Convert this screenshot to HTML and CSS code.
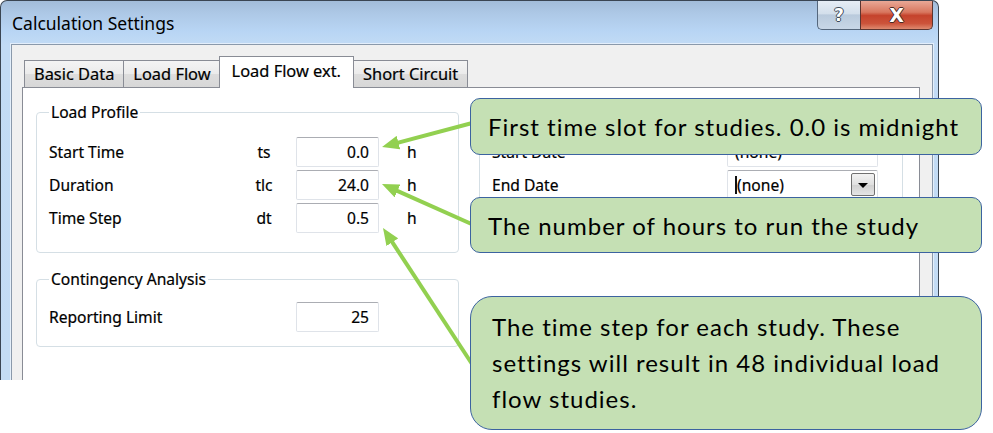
FILE: index.html
```html
<!DOCTYPE html>
<html>
<head>
<meta charset="utf-8">
<title>Calculation Settings</title>
<link rel="stylesheet" href="styles.css">
</head>
<body>
<div class="stage">
  <div class="window">
    <div class="titlebar">
      <span class="title">Calculation Settings</span>
      <div class="caption-buttons">
        <span class="cap-btn help">?</span>
        <span class="cap-btn close">X</span>
      </div>
    </div>
    <div class="client">
      <div class="tabs">
        <div class="tab">Basic Data</div>
        <div class="tab">Load Flow</div>
        <div class="tab active">Load Flow ext.</div>
        <div class="tab">Short Circuit</div>
      </div>
      <div class="panel">
        <div class="col-left">
          <fieldset class="group profile">
            <legend>Load Profile</legend>
            <div class="param-grid">
              <span class="lbl">Start Time</span><span class="sym">ts</span><span class="field num">0.0</span><span class="unit">h</span>
              <span class="lbl">Duration</span><span class="sym">tlc</span><span class="field num">24.0</span><span class="unit">h</span>
              <span class="lbl">Time Step</span><span class="sym">dt</span><span class="field num">0.5</span><span class="unit">h</span>
            </div>
          </fieldset>
          <fieldset class="group contingency">
            <legend>Contingency Analysis</legend>
            <div class="param-grid">
              <span class="lbl">Reporting Limit</span><span class="sym"></span><span class="field num">25</span><span class="unit"></span>
            </div>
          </fieldset>
        </div>
        <fieldset class="group dates">
          <div class="date-grid">
            <span class="lbl">Start Date</span><span class="field txt">(none)</span>
            <span class="lbl">End Date</span><span class="field txt combo"><span class="caret"></span>(none)<span class="drop"><span class="tri"></span></span></span>
          </div>
        </fieldset>
      </div>
    </div>
  </div>

  <svg class="arrows" width="993" height="433" viewBox="0 0 993 433">
    <defs>
      <marker id="head" markerUnits="userSpaceOnUse" markerWidth="17" markerHeight="14" refX="7" refY="7" orient="auto">
        <path d="M0,0 L17,7 L0,14 z" fill="#92d050"/>
      </marker>
    </defs>
    <line x1="476" y1="122" x2="391.7" y2="144.4" stroke="#92d050" stroke-width="4" marker-end="url(#head)"/>
    <line x1="476" y1="226" x2="391.1" y2="188.1" stroke="#92d050" stroke-width="4" marker-end="url(#head)"/>
    <line x1="474" y1="367" x2="388.5" y2="236.4" stroke="#92d050" stroke-width="4" marker-end="url(#head)"/>
  </svg>

  <div class="callout c1">First time slot for studies. 0.0 is midnight</div>
  <div class="callout c2">The number of hours to run the study</div>
  <div class="callout c3">The time step for each study. These settings will result in 48 individual load flow studies.</div>
</div>
</body>
</html>
```

FILE: styles.css
```css
html, body {
  margin: 0;
  padding: 0;
  background: #ffffff;
}

.stage {
  position: relative;
  width: 993px;
  height: 433px;
  overflow: hidden;
  background: #ffffff;
}

/* ---------- window frame ---------- */
.window {
  width: 939px;
  height: 380px;
  box-sizing: border-box;
  border: 1px solid #3a4552;
  border-bottom: none;
  border-radius: 7px 7px 0 0;
  overflow: hidden;
  display: flex;
  flex-direction: column;
  background: linear-gradient(180deg, #a2bcd9 0px, #adc8e6 12px, #b8d5f4 30px, #c2dbf5 44px, #c4dcf4 100%);
  font-family: "Noto Sans", "Open Sans", sans-serif;
  color: #111;
}

.titlebar {
  height: 43px;
  flex: none;
  display: flex;
  justify-content: space-between;
  align-items: flex-start;
  padding-left: 11px;
}

.title {
  font-size: 17.5px;
  line-height: 20px;
  margin-top: 12px;
  color: #000;
}

.caption-buttons {
  display: flex;
  margin-right: 5px;
}

.cap-btn {
  height: 29px;
  box-sizing: border-box;
  display: flex;
  align-items: center;
  justify-content: center;
  color: #fff;
  font-family: "DejaVu Sans", sans-serif;
  font-weight: bold;
  font-size: 17px;
}

.cap-btn.help {
  width: 43px;
  border: 1px solid #55677c;
  border-top: none;
  border-right: none;
  border-radius: 0 0 0 5px;
  background: linear-gradient(180deg, #e6edf5 0%, #d3dfeb 45%, #b9cadc 50%, #c8d7e7 100%);
  text-shadow: 1px 0 #3d4a58, -1px 0 #3d4a58, 0 1px #3d4a58, 0 -1px #3d4a58;
}

.cap-btn.close {
  width: 73px;
  border: 1px solid #5b3530;
  border-top: none;
  border-radius: 0 0 5px 0;
  background: linear-gradient(180deg, #e9a896 0%, #d8775f 40%, #c5432c 52%, #cc533a 80%, #de8a6f 100%);
  font-size: 19px;
  text-shadow: 1px 0 #4a2a25, -1px 0 #4a2a25, 0 1px #4a2a25, 0 -1px #4a2a25;
}

/* ---------- client ---------- */
.client {
  flex: 1;
  margin: 0 5px 0 10px;
  border: 1px solid #8a99ab;
  border-bottom: none;
  background: #f0f0f0;
  padding: 12px 12px 0 10px;
  display: flex;
  flex-direction: column;
  box-shadow: 0 0 0 1px rgba(255, 255, 255, 0.55);
}

.tabs {
  display: flex;
  align-items: flex-end;
  padding-left: 2px;
  height: 31px;
  position: relative;
  z-index: 2;
  margin-bottom: -1px;
}

.tab {
  height: 27px;
  box-sizing: border-box;
  padding: 0 9px;
  border: 1px solid #898c95;
  border-bottom: none;
  background: linear-gradient(180deg, #f4f4f4 0%, #ebebeb 50%, #dddddd 51%, #d7d7d7 100%);
  font-size: 16.4px;
  line-height: 26px;
  margin-right: -1px;
  margin-bottom: 1px;
  color: #000;
  -webkit-text-stroke: 0.2px #000;
}

.tab.active {
  height: 32px;
  margin-bottom: 0;
  padding: 0 12px;
  background: #ffffff;
  line-height: 28px;
  position: relative;
  z-index: 3;
  margin-left: -1px;
}

.panel {
  flex: 1;
  border: 1px solid #898c95;
  border-bottom: none;
  background: #ffffff;
  padding: 14px 15px 0 13px;
  display: flex;
  gap: 20px;
  align-items: flex-start;
}

.col-left {
  width: 423px;
  flex: none;
  display: flex;
  flex-direction: column;
  gap: 16px;
}

.group {
  margin: 0;
  box-sizing: border-box;
  border: 1px solid #d5dfe5;
  border-radius: 4px;
  padding: 14px 12px 19px 12px;
  font-size: 15.6px;
  min-width: 0;
}

.group legend {
  padding: 0 2px;
  line-height: 21px;
  color: #000;
  -webkit-text-stroke: 0.2px #000;
}

.group.contingency {
  padding-top: 12px;
  padding-bottom: 14px;
}

.group.dates {
  width: 424px;
  flex: none;
  margin-top: 10px;
  padding-top: 24px;
}

.param-grid {
  display: grid;
  grid-template-columns: 195px 52px 83px auto;
  row-gap: 3px;
  align-items: center;
}

.param-grid .sym {
  padding-right: 12px;
}

.param-grid .unit {
  padding-left: 28px;
}

.date-grid {
  display: grid;
  grid-template-columns: 235px 151px;
  row-gap: 3px;
  align-items: center;
}

.lbl, .sym, .unit {
  color: #000;
  line-height: 20px;
  -webkit-text-stroke: 0.2px #000;
}

.sym {
  text-align: center;
}

.field {
  height: 30px;
  box-sizing: border-box;
  border: 1px solid #dfe3e9;
  border-top-color: #abadb3;
  border-radius: 2px;
  background: #fff;
  display: flex;
  align-items: center;
  color: #000;
  -webkit-text-stroke: 0.2px #000;
}

.field.num {
  justify-content: flex-end;
  padding-right: 9px;
}

.field.txt {
  padding-left: 7px;
}

.combo {
  position: relative;
}

.caret {
  display: inline-block;
  width: 2px;
  height: 18px;
  background: #111;
}

.drop {
  position: absolute;
  right: 2px;
  top: 2px;
  width: 24px;
  height: 23px;
  box-sizing: border-box;
  border: 1px solid #707070;
  border-radius: 2px;
  background: linear-gradient(180deg, #f2f2f2, #e0e0e0 50%, #d0d0d0 51%, #e5e5e5);
  display: flex;
  align-items: center;
  justify-content: center;
}

.tri {
  width: 0;
  height: 0;
  border-left: 5px solid transparent;
  border-right: 5px solid transparent;
  border-top: 5px solid #000;
  margin-top: 2px;
}

/* ---------- annotations ---------- */
.arrows {
  position: absolute;
  left: 0;
  top: 0;
  pointer-events: none;
}

.callout {
  position: absolute;
  left: 470px;
  width: 512px;
  box-sizing: border-box;
  background: #c5e0b4;
  border: 1px solid #3c63a0;
  font-family: "Lato", "Open Sans", sans-serif;
  font-size: 24px;
  letter-spacing: 1px;
  color: #000;
  display: flex;
  align-items: center;
}

.c1 {
  top: 98px;
  height: 57px;
  border-radius: 10px;
  padding-left: 17px;
}

.c2 {
  top: 197px;
  height: 56px;
  border-radius: 10px;
  padding-left: 17px;
}

.c3 {
  top: 296px;
  height: 134px;
  border-radius: 22px;
  align-items: flex-start;
  padding: 12px 31px 0 21px;
  line-height: 36px;
}
```
